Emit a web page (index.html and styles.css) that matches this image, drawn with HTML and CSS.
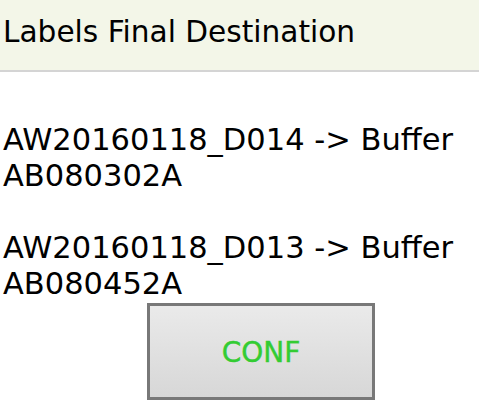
FILE: index.html
```html
<!DOCTYPE html>
<html lang="en">
<head>
    <meta charset="UTF-8">
    <meta name="viewport" content="width=device-width, initial-scale=1.0">
    <title>Labels Final Destination</title>
    <link rel="stylesheet" href="styles.css">
</head>
<body>
    <div class="header">Labels Final Destination</div>
    <div class="list">
        <p class="entry">AW20160118_D014 -&gt; Buffer AB080302A</p>
        <p class="entry">AW20160118_D013 -&gt; Buffer AB080452A</p>
    </div>
    <button class="conf-btn">CONF</button>
</body>
</html>
```

FILE: styles.css
```css
* { margin: 0; padding: 0; box-sizing: border-box; }
body { font-family: "DejaVu Sans", Verdana, sans-serif; background: #fff; color: #000; overflow: hidden; }
.header { background: #f3f6e8; border-bottom: 2px solid #d4d4d4; height: 72px; padding: 15px 3px 0; font-size: 29.6px; line-height: 34px; white-space: nowrap; }
.list { padding: 50px 3px 0; width: 466px; }
.entry { font-size: 30.5px; line-height: 36px; margin-bottom: 36px; }
.entry:last-child { margin-bottom: 0; }
.conf-btn { display: block; margin: 1px 0 0 147px; width: 228px; height: 97px; border: 3px solid #787878; background: linear-gradient(#eaeaea, #d7d7d7); color: #33cc33; font-family: "DejaVu Sans", Verdana, sans-serif; font-size: 28px; padding-top: 2px; -webkit-text-stroke: 0.4px #33cc33; cursor: pointer; }
```
